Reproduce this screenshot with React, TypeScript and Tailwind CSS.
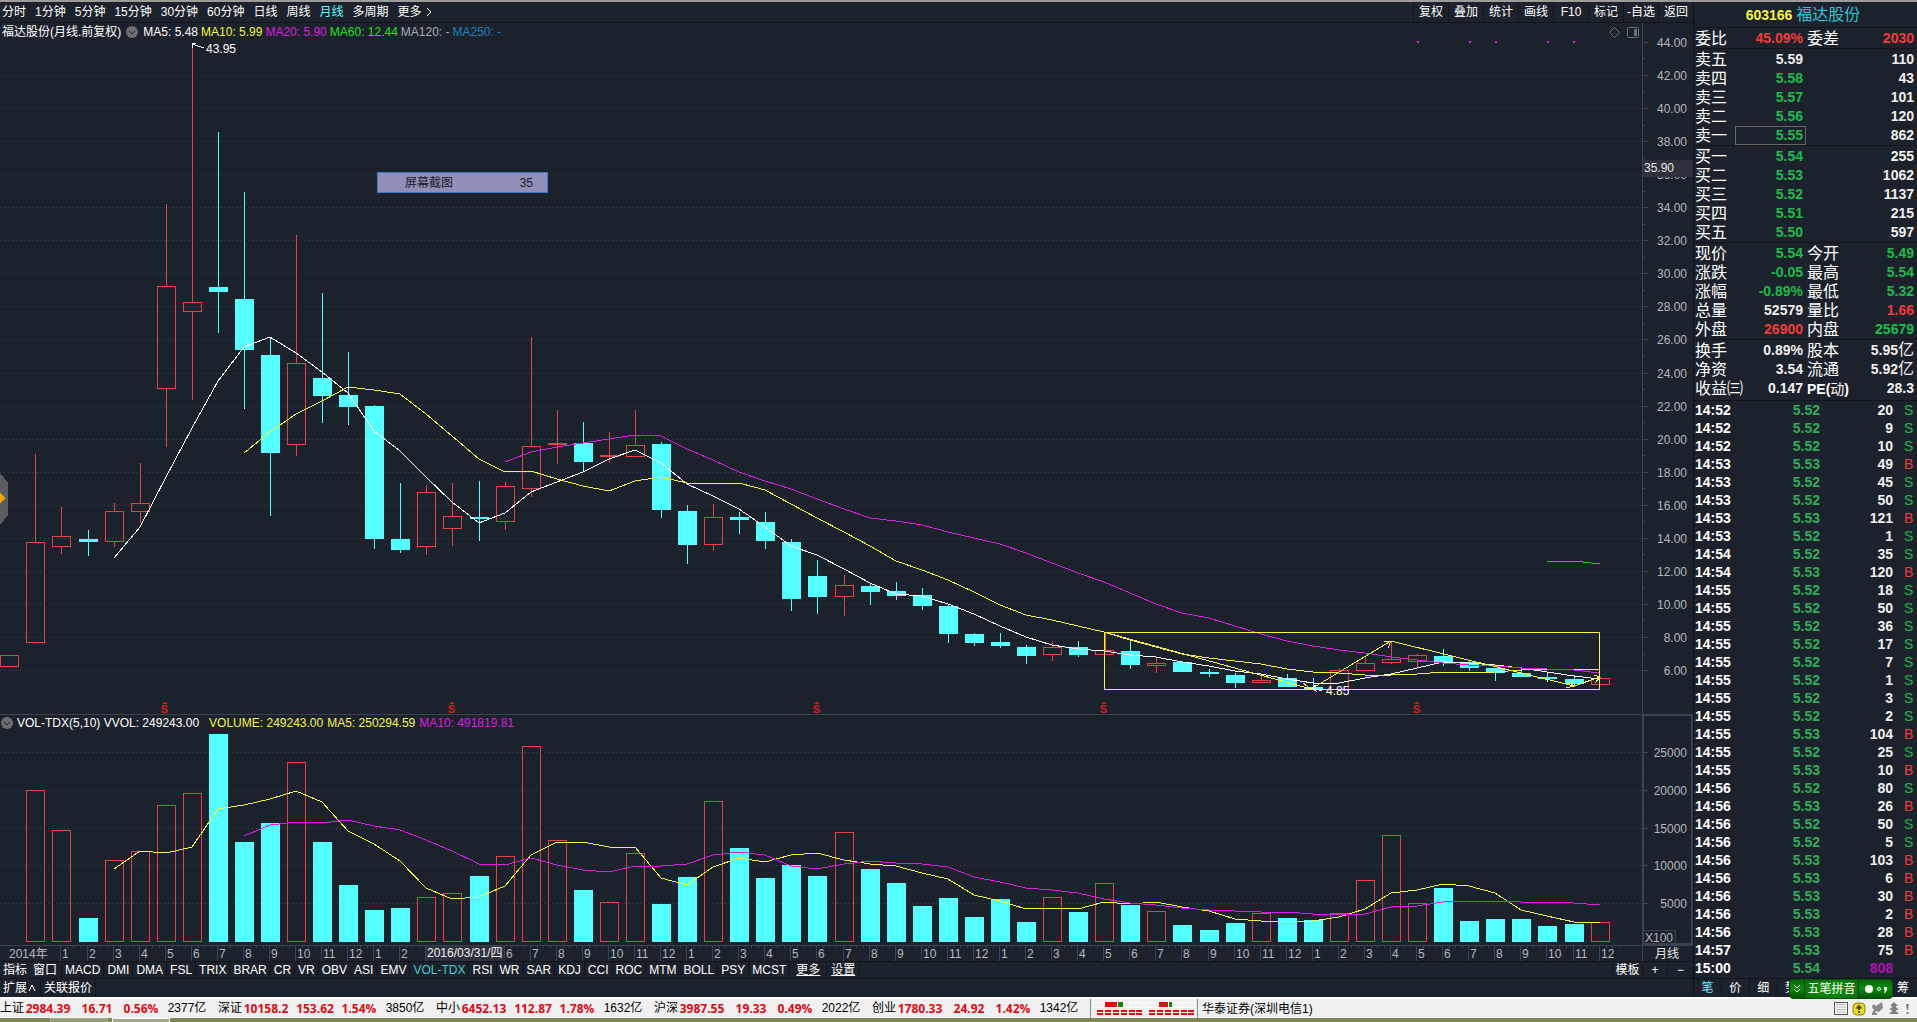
import type { ReactNode } from 'react'
import clsx from 'clsx'

const CYAN = '#54ffff'
const RED = '#e04444'
const YELLOW = '#f6f63a'
const MAGENTA = '#d81ee0'
const GRID = '#3b434e'
const AXIS_TEXT = '#b3b7bd'
const FONT = '"Liberation Sans", "Noto Sans CJK SC", sans-serif'

type Dir = 'r' | 'c'

// direction, high, body top, body bottom, low, top of the volume bar
const CANDLES: [Dir, number, number, number, number, number][] = [
  ['r', 655, 655, 666, 666, 941],
  ['r', 454, 542, 642, 642, 790],
  ['r', 507, 536, 546, 554, 830],
  ['c', 530, 539, 542, 556, 918],
  ['r', 503, 511, 541, 547, 860],
  ['r', 463, 503, 511, 523, 851],
  ['r', 204, 286, 388, 447, 805],
  ['r', 45, 302, 311, 400, 793],
  ['c', 132, 287, 292, 333, 734],
  ['c', 192, 299, 350, 409, 842],
  ['c', 338, 355, 453, 516, 823],
  ['r', 235, 363, 444, 456, 762],
  ['c', 293, 378, 396, 423, 842],
  ['c', 352, 395, 407, 425, 885],
  ['c', 405, 406, 539, 549, 910],
  ['c', 483, 539, 550, 553, 908],
  ['r', 485, 492, 546, 555, 897],
  ['r', 483, 516, 528, 546, 893],
  ['c', 481, 517, 519, 541, 876],
  ['r', 482, 486, 521, 530, 856],
  ['r', 337, 446, 488, 497, 746],
  ['r', 410, 443, 444, 464, 840],
  ['c', 422, 443, 462, 471, 890],
  ['r', 432, 455, 456, 463, 902],
  ['r', 410, 445, 456, 456, 853],
  ['c', 442, 444, 510, 518, 904],
  ['c', 505, 511, 545, 564, 877],
  ['r', 504, 517, 544, 551, 801],
  ['c', 512, 517, 520, 534, 848],
  ['c', 512, 522, 541, 549, 878],
  ['c', 539, 542, 599, 611, 865],
  ['c', 560, 576, 597, 614, 876],
  ['r', 575, 585, 596, 616, 832],
  ['c', 584, 586, 592, 605, 869],
  ['c', 582, 591, 596, 600, 883],
  ['c', 588, 595, 606, 610, 906],
  ['c', 605, 606, 634, 643, 898],
  ['c', 633, 634, 643, 646, 917],
  ['c', 633, 642, 646, 648, 899],
  ['c', 645, 647, 656, 664, 922],
  ['r', 641, 647, 654, 661, 897],
  ['c', 641, 647, 655, 657, 912],
  ['r', 633, 650, 654, 658, 883],
  ['c', 640, 651, 665, 669, 905],
  ['r', 657, 663, 665, 673, 911],
  ['c', 661, 662, 672, 672, 925],
  ['c', 669, 672, 674, 677, 930],
  ['c', 673, 675, 683, 688, 923],
  ['r', 675, 680, 682, 682, 913],
  ['c', 674, 678, 687, 687, 918],
  ['c', 678, 687, 689, 690, 920],
  ['r', 668, 670, 689, 689, 913],
  ['r', 657, 663, 670, 670, 880],
  ['r', 642, 659, 662, 664, 835],
  ['r', 654, 655, 661, 667, 903],
  ['c', 649, 656, 662, 666, 888],
  ['c', 661, 662, 668, 671, 921],
  ['c', 668, 668, 673, 681, 919],
  ['c', 667, 673, 677, 677, 919],
  ['c', 673, 677, 679, 682, 926],
  ['c', 675, 679, 684, 687, 924],
  ['r', 677, 678, 684, 684, 922],
]

// each average starts at the candle where it has enough history
const MA5 = [
  558, 527, 477, 428, 381, 347, 337, 353, 372, 393, 431, 451, 477, 502, 523, 513, 492, 482, 472, 459, 450, 463, 484,
  496, 509, 527, 546, 555, 569, 583, 594, 596, 604, 614, 626, 637, 645, 649, 651, 655, 657, 662, 666, 671, 674, 679,
  683, 683, 678, 674, 668, 662, 663, 665, 668, 672, 676, 679,
]
const MA10 = [
  453, 432, 414, 401, 387, 390, 394, 414, 436, 459, 472, 471, 479, 486, 491, 481, 477, 483, 483, 483, 490, 504, 518,
  532, 546, 561, 570, 580, 592, 605, 615, 620, 626, 632, 640, 647, 654, 658, 661, 664, 669, 672, 673, 675, 675, 674,
  672, 672, 672, 670, 669, 669, 670,
]
const MA20 = [
  462, 452, 447, 443, 439, 435, 436, 449, 460, 472, 481, 489, 499, 509, 518, 521, 525, 532, 538, 544, 553, 563, 573,
  582, 593, 604, 613, 618, 626, 634, 641, 646, 650, 653, 657, 660, 663, 665, 666, 668, 669, 670, 673,
]
const MA60 = [561, 561, 564]
const VOL_MA5 = [
  869, 851, 853, 847, 809, 805, 799, 791, 802, 831, 844, 861, 888, 899, 897, 886, 855, 842, 842, 847, 847, 878, 885,
  867, 858, 862, 855, 853, 860, 864, 866, 873, 879, 895, 901, 909, 908, 909, 902, 904, 902, 907, 911, 919, 921, 922,
  921, 917, 909, 893, 890, 884, 886, 893, 910, 916, 922, 922,
]
const VOL_MA10 = [
  836, 825, 822, 823, 820, 826, 830, 840, 851, 864, 865, 858, 865, 870, 872, 866, 866, 864, 855, 852, 855, 866, 869,
  864, 861, 863, 864, 867, 877, 882, 888, 890, 893, 899, 903, 905, 908, 910, 911, 912, 912, 914, 914, 914, 907, 906,
  902, 901, 901, 902, 902, 903, 905,
]

const AXIS_X = 1643
const cx = (i: number) => Math.floor(9.8 + 26.07 * i)
const line = (start: number, ys: number[]) => ys.map((y, k) => `${cx(start + k)},${y}`).join(' ')
const priceY = (p: number) => Math.floor(42.4 + (44 - p) * 16.53)

function Line({ start, ys, color }: { start: number; ys: number[]; color: string }) {
  return <polyline points={line(start, ys)} fill="none" stroke={color} />
}

function PriceChart() {
  const prices = Array.from({ length: 20 }, (_, k) => 44 - 2 * k)
  return (
    <svg viewBox="0 23 1693 691" preserveAspectRatio="none" className="block h-full w-full" shapeRendering="crispEdges">
      {prices.map((p) => (
        <g key={p}>
          {p < 44 && <line x1="0" x2={AXIS_X} y1={priceY(p) + 0.5} y2={priceY(p) + 0.5} stroke={GRID} strokeDasharray="1 3" />}
          <line x1={AXIS_X} x2={AXIS_X + 5} y1={priceY(p) + 0.5} y2={priceY(p) + 0.5} stroke={GRID} />
          {p > 6 && <line x1={AXIS_X} x2={AXIS_X + 2} y1={priceY(p - 1) + 0.5} y2={priceY(p - 1) + 0.5} stroke={GRID} />}
          <text x="1687" y={priceY(p) + 5} textAnchor="end" fontSize="12" fontFamily={FONT} fill={AXIS_TEXT}>
            {p.toFixed(2)}
          </text>
        </g>
      ))}
      <rect x={AXIS_X - 1} y="23" width="1" height="691" fill={GRID} />

      {CANDLES.map(([dir, high, top, bottom, low], i) => {
        const x = cx(i)
        return dir === 'c' ? (
          <g key={i} fill={CYAN}>
            <rect x={x} y={high} width="1" height={low - high} />
            <rect x={x - 9} y={top} width="19" height={bottom - top} />
          </g>
        ) : (
          <g key={i} fill={RED}>
            <rect x={x} y={high} width="1" height={top - high} />
            <rect x={x} y={bottom} width="1" height={low - bottom} />
            <rect x={x - 8.5} y={top + 0.5} width="18" height={bottom - top} fill="none" stroke={RED} />
          </g>
        )
      })}

      <Line start={4} ys={MA5} color="#ffffff" />
      <Line start={9} ys={MA10} color={YELLOW} />
      <Line start={19} ys={MA20} color={MAGENTA} />
      <Line start={59} ys={MA60} color="#22cc22" />

      {/* hand-drawn range box and swing arrows */}
      <g fill="none" stroke={YELLOW}>
        <rect x="1104.5" y="632.5" width="495" height="57" />
        <path d="M1104 632L1311 689L1391 641L1574 686L1600 677" />
        <path d="M1303 683L1311 689L1302 690M1384 641L1391 641L1388 648M1568 681L1574 686L1566 688M1594 675L1600 677L1595 683" />
      </g>
      <rect x="1105" y="633" width="1" height="18" fill="#e0641e" />

      <g fill="none" stroke="#ffffff">
        <path d="M192 44L204 48M196 43L192 44L193 48" />
        <path d="M1312 688L1322 691M1316 685L1312 688L1317 692" />
      </g>
      <g fontSize="12" fontFamily={FONT} fill="#ffffff">
        <text x="206" y="53">43.95</text>
        <text x="1326" y="695">4.85</text>
      </g>

      {/* dividend marks */}
      {[164, 451, 816, 1103, 1416].map((x) => (
        <g key={x} fill="#e01818">
          <path d={`M${x - 2} 704L${x + 1} 701L${x + 3} 704Z`} />
          <text x={x + 0.5} y="713" textAnchor="middle" fontSize="11" fontWeight="700" fontFamily={FONT}>
            S
          </text>
        </g>
      ))}
      {[1417, 1469, 1495, 1547, 1573].map((x) => (
        <rect key={x} x={x} y="41" width="2" height="2" fill="#c030c0" />
      ))}

      <g fill="none" stroke="#6a6f76" shapeRendering="auto">
        <path d="M1614.5 27.5L1619.5 32.5L1614.5 37.5L1609.5 32.5Z" />
        <rect x="1627.5" y="27.5" width="11" height="10" rx="1" />
        <rect x="1634" y="29" width="3" height="7" fill="#6a6f76" stroke="none" />
      </g>

      <rect x={AXIS_X} y="160" width="50" height="17" fill="#2f303d" />
      <text x="1644" y="172" fontSize="12" fontFamily={FONT} fill="#e6e6e6">
        35.90
      </text>

      <path d="M0 473L8 483V515L0 525Z" fill="#5a5e63" />
      <path d="M0 493L5 498L0 504Z" fill="#f0a500" />
    </svg>
  )
}

const VOL_GRID: [number, number][] = [
  [25000, 752],
  [20000, 790],
  [15000, 828],
  [10000, 865],
  [5000, 903],
]

function VolumeChart() {
  return (
    <svg viewBox="0 714 1693 231" preserveAspectRatio="none" className="block h-full w-full" shapeRendering="crispEdges">
      {VOL_GRID.map(([v, y]) => (
        <g key={v}>
          <line x1="0" x2={AXIS_X} y1={y + 0.5} y2={y + 0.5} stroke={GRID} strokeDasharray="1 3" />
          <line x1={AXIS_X} x2={AXIS_X + 5} y1={y + 0.5} y2={y + 0.5} stroke={GRID} />
          <line x1={AXIS_X} x2={AXIS_X + 2} y1={y + 19.5} y2={y + 19.5} stroke={GRID} />
          <text x="1687" y={y + 5} textAnchor="end" fontSize="12" fontFamily={FONT} fill={AXIS_TEXT}>
            {v}
          </text>
        </g>
      ))}
      <rect x="0" y="714" width="1693" height="1" fill={GRID} />
      <rect x={AXIS_X} y="715" width="49" height="229" fill="none" stroke={GRID} strokeWidth="2" />

      {CANDLES.map((c, i) =>
        c[0] === 'c' ? (
          <rect key={i} x={cx(i) - 9} y={c[5]} width="19" height={942 - c[5]} fill={CYAN} />
        ) : (
          <rect key={i} x={cx(i) - 8.5} y={c[5] + 0.5} width="18" height={941 - c[5]} fill="none" stroke={RED} />
        ),
      )}
      <Line start={4} ys={VOL_MA5} color={YELLOW} />
      <Line start={9} ys={VOL_MA10} color={MAGENTA} />

      <rect x="1643.5" y="930.5" width="32" height="13" fill="none" stroke={GRID} />
      <text x="1645" y="942" fontSize="12" fontFamily={FONT} fill={AXIS_TEXT}>
        X100
      </text>
    </svg>
  )
}

function TimeAxis() {
  return (
    <svg viewBox="0 945 1693 16" preserveAspectRatio="none" className="block h-full w-full" shapeRendering="crispEdges">
      <rect x="0" y="945" width="1693" height="1" fill={GRID} />
      <rect x={AXIS_X - 1} y="945" width="1" height="16" fill={GRID} />
      <g fontSize="12" fontFamily={FONT} fill={AXIS_TEXT}>
        <text x="9" y="958">
          2014年
        </text>
        {CANDLES.map((_, i) =>
          i < 2 ? null : (
            <g key={i}>
              <rect x={cx(i) - 1} y="945" width="1" height="16" fill={GRID} />
              {[6, 12, 19].map((d) => (
                <rect key={d} x={cx(i) + d} y="945" width="1" height="3" fill={GRID} />
              ))}
              {(i < 16 || i > 18) && (
                <text x={cx(i) + 1} y="958">
                  {((i - 2) % 12) + 1}
                </text>
              )}
            </g>
          ),
        )}
      </g>
      <rect x="426" y="946" width="78" height="15" fill="#2f303d" />
      <text x="427" y="957" fontSize="12" fontFamily={FONT} fill="#f0f0f0">
        2016/03/31/四
      </text>
      <text x="1655" y="958" fontSize="12" fontFamily={FONT} fill="#e6e6e6">
        月线
      </text>
    </svg>
  )
}

function Collapse({ label }: { label: string }) {
  return (
    <button aria-label={label} className="flex size-3 shrink-0 items-center justify-center rounded-full bg-[#6b6d70]">
      <svg viewBox="0 0 8 8" className="size-2" fill="none" stroke="#1c222c">
        <path d="M1 3L4 6L7 3" />
      </svg>
    </button>
  )
}

const PERIODS = ['分时', '1分钟', '5分钟', '15分钟', '30分钟', '60分钟', '日线', '周线', '月线', '多周期', '更多']
const TOOLS = ['复权', '叠加', '统计', '画线', 'F10', '标记', '-自选', '返回']

function Toolbar() {
  return (
    <nav className="flex h-[21px] shrink-0 items-center justify-between border-b border-[#11161d] text-white">
      <div className="flex gap-[9px] pl-0.5">
        {PERIODS.map((p) => (
          <button key={p} className={clsx('flex items-center', p === '月线' && 'text-[#54ffff]')}>
            {p}
            {p === '更多' && (
              <svg viewBox="0 0 6 10" className="ml-1 h-2.5 w-1.5" fill="none" stroke="currentColor">
                <path d="M1 1L5 5L1 9" />
              </svg>
            )}
          </button>
        ))}
      </div>
      <div className="flex h-full">
        {TOOLS.map((t) => (
          <button key={t} className="w-[35px] border-l border-[#11161d]">
            {t}
          </button>
        ))}
      </div>
    </nav>
  )
}

const INDICATORS = [
  'MACD', 'DMI', 'DMA', 'FSL', 'TRIX', 'BRAR', 'CR', 'VR', 'OBV', 'ASI', 'EMV', 'VOL-TDX', 'RSI', 'WR', 'SAR', 'KDJ',
  'CCI', 'ROC', 'MTM', 'BOLL', 'PSY', 'MCST',
]

function Cell({ children, className }: { children: ReactNode; className?: string }) {
  return <button className={clsx('border-r border-[#11161d]', className)}>{children}</button>
}

function IndicatorBars() {
  return (
    <div className="shrink-0 text-white">
      <div className="flex h-[17px] justify-between border-t border-[#11161d] leading-4">
        <div className="flex">
          <button className="pl-[3px]">指标</button>
          <Cell className="pr-1 pl-1.5">窗口</Cell>
          {INDICATORS.map((n) => (
            <Cell key={n} className={clsx('px-[3px]', n === 'VOL-TDX' && 'text-[#3fd0d0]')}>
              {n}
            </Cell>
          ))}
          <Cell className="px-1.5 underline">更多</Cell>
          <Cell className="px-1 underline">设置</Cell>
        </div>
        <div className="flex">
          <button className="w-[31px] border-x border-[#11161d]">模板</button>
          <button className="w-[25px] border-r border-[#11161d]">+</button>
          <button className="w-[25px]">−</button>
        </div>
      </div>
      <div className="flex h-[19px] border-t border-[#11161d] leading-[18px]">
        <button className="flex items-center border-r border-[#11161d] pr-1 pl-[3px]">
          扩展
          <svg viewBox="0 0 8 8" className="ml-px size-2" fill="none" stroke="currentColor">
            <path d="M1 7L4 1L7 7" />
          </svg>
        </button>
        <Cell className="px-[3px]">关联报价</Cell>
      </div>
    </div>
  )
}

type Tone = 'w' | 'g' | 'r' | 'm'
const TONES: Record<Tone, string> = {
  w: 'text-[#f0f0f0]',
  g: 'text-[#1dbb4c]',
  r: 'text-[#f03c3c]',
  m: 'text-[#b010b8]',
}

const ASKS = [['卖五', '5.59', '110'], ['卖四', '5.58', '43'], ['卖三', '5.57', '101'], ['卖二', '5.56', '120'], ['卖一', '5.55', '862']]
const BIDS = [['买一', '5.54', '255'], ['买二', '5.53', '1062'], ['买三', '5.52', '1137'], ['买四', '5.51', '215'], ['买五', '5.50', '597']]

type Quote = [string, string, Tone, string, string, Tone]
const QUOTES: Quote[] = [
  ['现价', '5.54', 'g', '今开', '5.49', 'g'],
  ['涨跌', '-0.05', 'g', '最高', '5.54', 'g'],
  ['涨幅', '-0.89%', 'g', '最低', '5.32', 'g'],
  ['总量', '52579', 'w', '量比', '1.66', 'r'],
  ['外盘', '26900', 'r', '内盘', '25679', 'g'],
]
const FUNDAMENTALS: Quote[] = [
  ['换手', '0.89%', 'w', '股本', '5.95亿', 'w'],
  ['净资', '3.54', 'w', '流通', '5.92亿', 'w'],
  ['收益㈢', '0.147', 'w', 'PE(动)', '28.3', 'w'],
]

function Num({ text, tone, boxed }: { text: string; tone: Tone; boxed?: boolean }) {
  const unit = text.endsWith('亿')
  return (
    <span
      className={clsx(
        'text-sm leading-[17px] font-bold',
        TONES[tone],
        boxed && '-mr-[3px] w-[71px] border border-[#666] pr-0.5 text-right leading-4',
      )}
    >
      {unit ? text.slice(0, -1) : text}
      {unit && <span className="text-base leading-4 font-normal">亿</span>}
    </span>
  )
}

function QuoteRow({ row, boxed }: { row: Quote; boxed?: boolean }) {
  const [l1, v1, t1, l2, v2, t2] = row
  return (
    <div className="flex h-[19px] items-center gap-1 pr-[3px] pl-px">
      <div className="flex w-[108px] items-center justify-between">
        <span>{l1}</span>
        <Num text={v1} tone={t1} boxed={boxed} />
      </div>
      <div className="flex flex-1 items-center justify-between whitespace-nowrap">
        {l2.startsWith('PE') ? <span className="text-sm font-bold">PE(<span className="font-normal">动</span>)</span> : <span>{l2}</span>}
        <Num text={v2} tone={t2} />
      </div>
    </div>
  )
}

function Section({ children, className }: { children: ReactNode; className?: string }) {
  return <div className={clsx('shrink-0 border-b border-[#11161d] pt-px', className)}>{children}</div>
}

// time, price, lots, side
const TAPE: [string, string, number, 'S' | 'B' | ''][] = [
  ['14:52', '5.52', 20, 'S'],
  ['14:52', '5.52', 9, 'S'],
  ['14:52', '5.52', 10, 'S'],
  ['14:53', '5.53', 49, 'B'],
  ['14:53', '5.52', 45, 'S'],
  ['14:53', '5.52', 50, 'S'],
  ['14:53', '5.53', 121, 'B'],
  ['14:53', '5.52', 1, 'S'],
  ['14:54', '5.52', 35, 'S'],
  ['14:54', '5.53', 120, 'B'],
  ['14:55', '5.52', 18, 'S'],
  ['14:55', '5.52', 50, 'S'],
  ['14:55', '5.52', 36, 'S'],
  ['14:55', '5.52', 17, 'S'],
  ['14:55', '5.52', 7, 'S'],
  ['14:55', '5.52', 1, 'S'],
  ['14:55', '5.52', 3, 'S'],
  ['14:55', '5.52', 2, 'S'],
  ['14:55', '5.53', 104, 'B'],
  ['14:55', '5.52', 25, 'S'],
  ['14:55', '5.53', 10, 'B'],
  ['14:56', '5.52', 80, 'S'],
  ['14:56', '5.53', 26, 'B'],
  ['14:56', '5.52', 50, 'S'],
  ['14:56', '5.52', 5, 'S'],
  ['14:56', '5.53', 103, 'B'],
  ['14:56', '5.53', 6, 'B'],
  ['14:56', '5.53', 30, 'B'],
  ['14:56', '5.53', 2, 'B'],
  ['14:56', '5.53', 28, 'B'],
  ['14:57', '5.53', 75, 'B'],
  ['15:00', '5.54', 808, ''],
]

function Tape() {
  return (
    <table className="w-full table-fixed border-collapse text-sm leading-[18px] font-bold">
      <colgroup>
        <col className="w-[44px]" />
        <col className="w-[82px]" />
        <col className="w-[73px]" />
        <col />
      </colgroup>
      <tbody>
        {TAPE.map(([time, price, lots, side], i) => (
          <tr key={i} className="h-[18px]">
            <td className="py-0 pl-px text-white">{time}</td>
            <td className="p-0 text-right text-[#2eae5a]">{price}</td>
            <td className={clsx('p-0 text-right', TONES[side ? 'w' : 'm'])}>{lots}</td>
            <td className={clsx('py-0 pl-[11px] font-normal', TONES[side === 'B' ? 'r' : 'g'])}>{side}</td>
          </tr>
        ))}
      </tbody>
    </table>
  )
}

function InputMethodBar() {
  return (
    <div className="absolute right-6 -bottom-0.5 flex h-5 w-[104px] items-center rounded-sm border border-[#0a4f0a] bg-linear-to-b from-[#0a6a0a] via-[#0c8a0c] to-[#075207] text-white">
      <button aria-label="展开" className="flex h-full w-[15px] items-center justify-center border-r border-[#064006]">
        <svg viewBox="0 0 8 10" className="h-2.5 w-2" fill="none" stroke="currentColor">
          <path d="M1 1L4 4L7 1M1 5L4 8L7 5" />
        </svg>
      </button>
      <button className="h-full flex-1 bg-radial from-[#0f9a0f] to-[#0a6a0a] text-xs leading-[18px] whitespace-nowrap">五笔拼音</button>
      <button aria-label="标点" className="flex h-full w-[34px] items-center justify-center border-l border-[#064006]">
        <svg viewBox="0 0 26 12" className="h-3 w-[26px]" fill="#fff">
          <circle cx="6" cy="6" r="4" />
          <circle cx="16" cy="6" r="1.5" fill="none" stroke="#fff" />
          <path d="M21 4h3v3l-2 3h-1l1-3h-1z" />
        </svg>
      </button>
    </div>
  )
}

function QuotePanel() {
  return (
    <aside className="relative flex w-[224px] shrink-0 flex-col border-l border-[#0e1319] text-base leading-[19px] text-white">
      <h1 className="flex h-[26px] shrink-0 items-center justify-center gap-1 border-b border-[#11161d] pr-[5px]">
        <span className="text-sm font-bold text-[#f6f63a]">603166</span>
        <span className="text-[#2cc4d4]">福达股份</span>
      </h1>
      <Section>
        <QuoteRow row={['委比', '45.09%', 'r', '委差', '2030', 'r']} />
      </Section>
      <Section>
        {ASKS.map(([l, p, v], i) => (
          <QuoteRow key={l} row={[l, p, i ? 'g' : 'w', '', v, 'w']} boxed={i === 4} />
        ))}
      </Section>
      <Section>
        {BIDS.map(([l, p, v]) => (
          <QuoteRow key={l} row={[l, p, 'g', '', v, 'w']} />
        ))}
      </Section>
      <Section>
        {QUOTES.map((q) => (
          <QuoteRow key={q[0]} row={q} />
        ))}
      </Section>
      <Section className="pb-0.5">
        {FUNDAMENTALS.map((q) => (
          <QuoteRow key={q[0]} row={q} />
        ))}
      </Section>
      <div className="min-h-0 flex-1 overflow-hidden">
        <Tape />
      </div>
      <div className="grid h-[19px] shrink-0 grid-cols-8 border-t border-[#11161d] text-xs leading-[18px]">
        {['笔', '价', '细', '势'].map((t, i) => (
          <button key={t} className={clsx('border-r border-[#11161d]', i === 0 && 'text-[#54ffff]')}>
            {t}
          </button>
        ))}
        <button className="col-start-8">筹</button>
      </div>
      <InputMethodBar />
    </aside>
  )
}

const INDICES = [
  ['上证', '2984.39', '16.71', '0.56%', '2377亿'],
  ['深证', '10158.2', '153.62', '1.54%', '3850亿'],
  ['中小', '6452.13', '112.87', '1.78%', '1632亿'],
  ['沪深', '3987.55', '19.33', '0.49%', '2022亿'],
  ['创业', '1780.33', '24.92', '1.42%', '1342亿'],
]

function Meter({ red, green }: { red: [number, number]; green: [number, number] }) {
  return (
    <svg viewBox="0 0 50 16" className="h-4 w-[50px]" shapeRendering="crispEdges">
      <path d="M.5 1.5h49v5h-49zM12.5 1.5v5M24.5 1.5v5M37.5 1.5v5" fill="none" stroke="#fff" />
      <rect x={red[0]} y="1" width={red[1]} height="5" fill="#e01010" />
      <rect x={green[0]} y="1" width={green[1]} height="5" fill="#0a8a0a" />
      {[4, 12, 20, 28, 36, 43].map((x) => (
        <g key={x} fill="#e01010">
          <rect x={x} y="9" width="6" height="2" />
          <rect x={x} y="12" width="6" height="2" />
        </g>
      ))}
    </svg>
  )
}

function StatusIcons() {
  return (
    <svg viewBox="0 0 78 16" className="mr-[5px] ml-auto h-4 w-[78px]">
      <rect x=".5" y="1.5" width="13" height="12" fill="#fafafa" stroke="#555" />
      <path d="M2 3.5h10M2 6h10M2 8.5h10M2 11h10" stroke="#b5b5b5" />
      <rect x="19" y="2" width="12" height="12" rx="4" fill="#e8dc1e" stroke="#8a8410" />
      <path d="M25 3.5L28.5 7.5H26V9h-2V7.5H21.5ZM24 10h2v2h-2z" fill="#4a4608" />
      <path d="M39 3l3 2 6-4 1 6-4 4-3-1-1 2h2v2h-5v-2l2-3-2-3z" fill="#8a8a8a" />
      <path d="M60 1l4 4h-2v1l3 3h-3v1l3 3h-10l3-3v-1h-3l3-3v-1h-2z" fill="#808080" />
      <path d="M72 3h3l-1 6h-1zM72.5 11h2v2h-2z" fill="#808080" />
    </svg>
  )
}

function StatusBar() {
  return (
    <footer className="flex h-[21px] shrink-0 items-center border-t-2 border-white bg-[#f0f0f0] text-xs text-black">
      {INDICES.map(([name, value, change, pct, amount]) => (
        <div key={name} className="grid w-[218px] shrink-0 grid-cols-[24px_48px_50px_38px_1fr] text-center whitespace-nowrap">
          <span className="text-left">{name}</span>
          <span className="font-['Open_Sans'] leading-[18px] font-bold text-[#e00a14]">{value}</span>
          <span className="font-['Open_Sans'] leading-[18px] font-bold text-[#e00a14]">{change}</span>
          <span className="font-['Open_Sans'] leading-[18px] font-bold text-[#e00a14]">{pct}</span>
          <span className="pr-1">{amount}</span>
        </div>
      ))}
      <div className="flex h-full shrink-0 items-center gap-0.5 border-x border-[#8a8a8a] px-0.5">
        <Meter red={[12, 12]} green={[25, 5]} />
        <Meter red={[14, 9]} green={[24, 3]} />
      </div>
      <span className="ml-1 whitespace-nowrap">华泰证券(深圳电信1)</span>
      <StatusIcons />
    </footer>
  )
}

export default function App() {
  return (
    <div className="flex h-screen flex-col overflow-hidden bg-[#1c222c] font-['Liberation_Sans','Noto_Sans_CJK_SC',sans-serif] text-xs">
      <div className="h-0.5 shrink-0 bg-[#9b9b9b]" />
      <div className="flex min-h-0 flex-1">
        <main className="flex min-w-0 flex-1 flex-col">
          <Toolbar />
          <section className="relative min-h-0 flex-1">
            <PriceChart />
            <div className="absolute top-0 left-0.5 flex h-[18px] items-center gap-[3px] text-white">
              <span>福达股份(月线.前复权)</span>
              <div className="px-0.5">
                <Collapse label="主图指标" />
              </div>
              <span>MA5: 5.48</span>
              <span className="text-[#f6f63a]">MA10: 5.99</span>
              <span className="text-[#d81ee0]">MA20: 5.90</span>
              <span className="text-[#22e022]">MA60: 12.44</span>
              <span className="text-[#a8acb2]">MA120: -</span>
              <span className="text-[#1f7fbf]">MA250: -</span>
            </div>
            <div className="absolute top-[149px] left-[377px] flex h-[21px] w-[171px] items-center justify-between border border-[#3a7ac8] bg-[#8f8fb9] pr-3.5 pl-[27px] text-[#1a1a24]">
              <span>屏幕截图</span>
              <span>35</span>
            </div>
          </section>
          <section className="relative h-[231px] shrink-0">
            <VolumeChart />
            <div className="absolute top-px left-px flex h-4 items-center gap-1 text-white">
              <Collapse label="副图指标" />
              <span>VOL-TDX(5,10) VVOL: 249243.00</span>
              <span className="ml-1.5 text-[#f6f63a]">VOLUME: 249243.00</span>
              <span className="text-[#f6f63a]">MA5: 250294.59</span>
              <span className="text-[#d81ee0]">MA10: 491819.81</span>
            </div>
          </section>
          <div className="h-4 shrink-0">
            <TimeAxis />
          </div>
          <IndicatorBars />
        </main>
        <QuotePanel />
      </div>
      <StatusBar />
      <div className="flex h-1 shrink-0 gap-1 bg-[#7f8554] pl-[50px]">
        <span className="w-[58px] border-x border-t border-[#a9b58c] bg-[#8f9c78]" />
        <span className="w-[58px] border-x border-t border-white bg-[#a3a88c]" />
      </div>
    </div>
  )
}
